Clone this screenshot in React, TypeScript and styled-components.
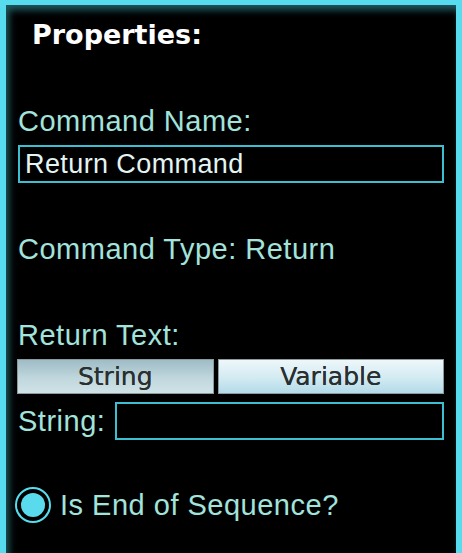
import React, { useState } from 'react';
import styled, { createGlobalStyle } from 'styled-components';

const GlobalStyle = createGlobalStyle`
  html, body {
    margin: 0;
    padding: 0;
    background: #000;
  }
`;

const Panel = styled.div`
  width: 462px;
  height: 553px;
  box-sizing: border-box;
  background: #000;
  border-top: 5px solid #56dcee;
  border-left: 6px solid #56dcee;
  border-right: 6px solid #56dcee;
  box-shadow: inset 3px 5px 7px rgba(70, 200, 215, 0.45);
  padding: 14px 12px 0 12px;
  display: flex;
  flex-direction: column;
  font-family: 'Liberation Sans', Arial, sans-serif;
  overflow: hidden;
`;

const Title = styled.div`
  font-family: 'DejaVu Sans', Verdana, sans-serif;
  font-weight: bold;
  font-size: 27px;
  line-height: 32px;
  color: #fff;
  padding-left: 14px;
  margin-bottom: 54px;
`;

const Label = styled.div<{ $gap?: number }>`
  font-size: 29px;
  line-height: 32px;
  letter-spacing: 0.5px;
  color: #a2e3dc;
  margin-bottom: ${(p) => p.$gap ?? 0}px;
  white-space: nowrap;
`;

const TextBox = styled.div<{ $grow?: boolean }>`
  box-sizing: border-box;
  height: 38px;
  border: 2px solid #3cbfd1;
  color: #e4f4f2;
  font-size: 27px;
  line-height: 34px;
  letter-spacing: 0.4px;
  padding-left: 5px;
  flex: ${(p) => (p.$grow ? 1 : 'none')};
`;

const Toggle = styled.div`
  display: flex;
  gap: 4px;
  height: 35px;
  margin: 8px 0 8px -1px;
`;

const ToggleButton = styled.div<{ $active: boolean; $w: number }>`
  box-sizing: border-box;
  width: ${(p) => p.$w}px;
  border: 1px solid #8a9a9e;
  background: ${(p) =>
    p.$active
      ? 'linear-gradient(#9fbcc6, #c0d7dd 55%, #d0e3e7)'
      : 'linear-gradient(#eef7fa, #d2eaf2 55%, #b3dbe9)'};
  color: #2a2f30;
  font-family: 'DejaVu Sans', Verdana, sans-serif;
  font-size: 25px;
  line-height: 33px;
  text-align: center;
  text-shadow: 0 0 0.6px #2a2f30;
  cursor: pointer;
`;

const Row = styled.div`
  display: flex;
  align-items: center;
  gap: 10px;
`;

const RadioRow = styled.div`
  display: flex;
  align-items: center;
  gap: 9px;
  margin-top: 47px;
  margin-left: -3px;
`;

const Radio = styled.div`
  width: 36px;
  height: 36px;
  box-sizing: border-box;
  border-radius: 50%;
  border: 2px solid #56dcee;
  display: flex;
  align-items: center;
  justify-content: center;
`;

const RadioDot = styled.div`
  width: 24px;
  height: 24px;
  border-radius: 50%;
  background: #5adbed;
`;

export default function App() {
  const [mode, setMode] = useState<'string' | 'variable'>('string');
  return (
    <>
      <GlobalStyle />
      <Panel>
        <Title>Properties:</Title>
        <Label $gap={8}>Command Name:</Label>
        <TextBox>Return Command</TextBox>
        <Label style={{ marginTop: 50 }}>Command Type: Return</Label>
        <Label style={{ marginTop: 54 }}>Return Text:</Label>
        <Toggle>
          <ToggleButton $w={197} $active={mode === 'string'} onClick={() => setMode('string')}>
            String
          </ToggleButton>
          <ToggleButton $w={227} $active={mode === 'variable'} onClick={() => setMode('variable')}>
            Variable
          </ToggleButton>
        </Toggle>
        <Row>
          <Label>String:</Label>
          <TextBox $grow />
        </Row>
        <RadioRow>
          <Radio>
            <RadioDot />
          </Radio>
          <Label>Is End of Sequence?</Label>
        </RadioRow>
      </Panel>
    </>
  );
}
